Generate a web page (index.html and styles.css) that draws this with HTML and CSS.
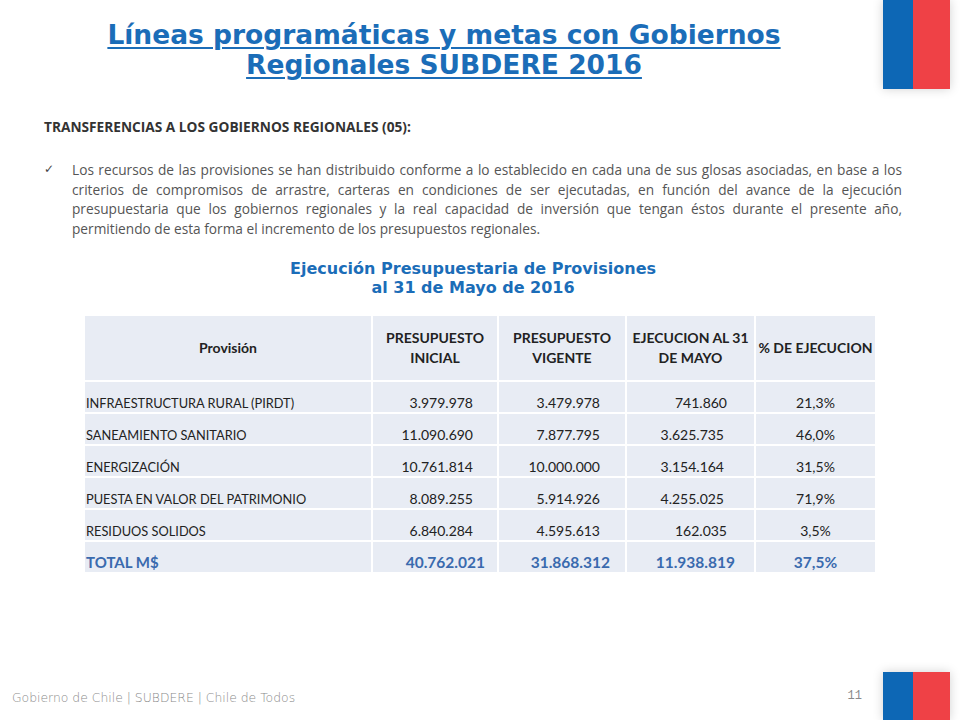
FILE: index.html
```html
<!DOCTYPE html>
<html lang="es">
<head>
<meta charset="utf-8">
<title>Líneas programáticas y metas con Gobiernos Regionales SUBDERE 2016</title>
<link rel="stylesheet" href="styles.css">
</head>
<body>
<div class="slide">
  <div class="flag flag-top"><span class="blue"></span><span class="red"></span></div>
  <div class="flag flag-bottom"><span class="blue"></span><span class="red"></span></div>

  <h1 class="title"><span>Líneas programáticas y metas con Gobiernos<br>Regionales SUBDERE 2016</span></h1>

  <p class="section-head">TRANSFERENCIAS A LOS GOBIERNOS REGIONALES (05):</p>

  <div class="bullet">
    <span class="check">&#10003;</span>
    <p class="bullet-text">Los recursos de las provisiones se han distribuido conforme a lo establecido en cada una de sus glosas asociadas, en base a los criterios de compromisos de arrastre, carteras en condiciones de ser ejecutadas, en función del avance de la ejecución presupuestaria que los gobiernos regionales y la real capacidad de inversión que tengan éstos durante el presente año, permitiendo de esta forma el incremento de los presupuestos regionales.</p>
  </div>

  <h2 class="chart-title">Ejecución Presupuestaria de Provisiones<br>al 31 de Mayo de 2016</h2>

  <div class="grid">
    <div class="cell head c1">Provisión</div>
    <div class="cell head">PRESUPUESTO<br>INICIAL</div>
    <div class="cell head">PRESUPUESTO<br>VIGENTE</div>
    <div class="cell head">EJECUCION AL 31<br>DE MAYO</div>
    <div class="cell head">% DE EJECUCION</div>

    <div class="cell name">INFRAESTRUCTURA RURAL (PIRDT)</div>
    <div class="cell n2">3.979.978</div>
    <div class="cell n3">3.479.978</div>
    <div class="cell n4 s">741.860</div>
    <div class="cell n5">21,3%</div>

    <div class="cell name">SANEAMIENTO SANITARIO</div>
    <div class="cell n2">11.090.690</div>
    <div class="cell n3">7.877.795</div>
    <div class="cell n4">3.625.735</div>
    <div class="cell n5">46,0%</div>

    <div class="cell name">ENERGIZACIÓN</div>
    <div class="cell n2">10.761.814</div>
    <div class="cell n3">10.000.000</div>
    <div class="cell n4">3.154.164</div>
    <div class="cell n5">31,5%</div>

    <div class="cell name">PUESTA EN VALOR DEL PATRIMONIO</div>
    <div class="cell n2">8.089.255</div>
    <div class="cell n3">5.914.926</div>
    <div class="cell n4">4.255.025</div>
    <div class="cell n5">71,9%</div>

    <div class="cell name">RESIDUOS SOLIDOS</div>
    <div class="cell n2">6.840.284</div>
    <div class="cell n3">4.595.613</div>
    <div class="cell n4 s">162.035</div>
    <div class="cell n5">3,5%</div>

    <div class="cell name total">TOTAL M$</div>
    <div class="cell n2 total">40.762.021</div>
    <div class="cell n3 total">31.868.312</div>
    <div class="cell n4 total t">11.938.819</div>
    <div class="cell n5 total">37,5%</div>
  </div>

  <div class="footer">
    <span class="footer-text">Gobierno de Chile | SUBDERE | Chile de Todos</span>
    <span class="page-num">11</span>
  </div>
</div>
</body>
</html>
```

FILE: styles.css
```css
html, body {
  margin: 0;
  padding: 0;
  background: #ffffff;
}

.slide {
  position: relative;
  width: 960px;
  height: 720px;
  overflow: hidden;
  background: #ffffff;
  display: flex;
  flex-direction: column;
}

.flag {
  position: absolute;
  left: 883px;
  width: 67px;
  display: flex;
  box-shadow: 0 0 10px rgba(0, 0, 0, 0.18);
}
.flag .blue { width: 30px; background: #0d67b5; }
.flag .red { flex: 1; background: #ef4146; }
.flag-top { top: 0; height: 89px; }
.flag-bottom { top: 672px; height: 48px; }

.title {
  margin: 20px 0 0 0;
  width: 888px;
  text-align: center;
  font-family: "DejaVu Sans", Verdana, sans-serif;
  font-weight: bold;
  font-size: 26.5px;
  line-height: 30px;
  color: #1b6db8;
}
.title span {
  text-decoration: underline;
  text-decoration-thickness: 2px;
  text-underline-offset: 3px;
}

.section-head {
  margin: 38px 0 0 44px;
  font-family: "Open Sans", sans-serif;
  font-weight: bold;
  font-size: 13.7px;
  line-height: 18px;
  color: #333333;
}

.bullet {
  display: flex;
  margin: 24px 0 0 44px;
  width: 858px;
}
.check {
  width: 28px;
  flex: none;
  font-family: "DejaVu Sans", sans-serif;
  font-size: 12px;
  line-height: 19.5px;
  color: #444444;
}
.bullet-text {
  margin: 0;
  flex: 1;
  text-align: justify;
  font-family: "Open Sans", sans-serif;
  font-size: 13.7px;
  line-height: 19.5px;
  color: #555555;
}

.chart-title {
  margin: 21px 0 0 0;
  width: 946px;
  text-align: center;
  font-family: "DejaVu Sans", sans-serif;
  font-weight: bold;
  font-size: 16px;
  line-height: 19px;
  color: #1b6db8;
}

.grid {
  margin: 19px 0 0 85px;
  display: grid;
  grid-template-columns: 286px 124px 126px 127px 119px;
  grid-template-rows: 64px repeat(6, 30px);
  gap: 2px;
  width: 790px;
  font-family: Lato, "Open Sans", sans-serif;
  font-size: 14px;
  line-height: 16px;
  color: #222222;
}
.cell {
  background: #e8ecf4;
  display: flex;
  align-items: flex-end;
  padding-bottom: 1px;
  box-sizing: border-box;
}
.head {
  align-items: center;
  justify-content: center;
  text-align: center;
  font-weight: bold;
  line-height: 20px;
  padding-bottom: 0;
}
.name { padding-left: 1px; font-size: 12.8px; }
.n2 { justify-content: flex-end; padding-right: 24px; }
.n3 { justify-content: flex-end; padding-right: 25px; }
.n4 { justify-content: flex-end; padding-right: 30px; }
.n4.s { padding-right: 27px; }
.n5 { justify-content: center; }
.total {
  color: #3a6aae;
  font-weight: bold;
  font-size: 15.5px;
  line-height: 18px;
}
.name.total { font-size: 15px; }
.n2.total { padding-right: 12px; }
.n3.total { padding-right: 15px; }
.n4.total { padding-right: 19px; }

.footer {
  margin-top: auto;
  height: 48px;
  display: flex;
  align-items: center;
  font-family: "DejaVu Sans", sans-serif;
  color: #8a8a8a;
}
.footer-text {
  margin-left: 12px;
  margin-top: 2px;
  font-size: 12.4px;
  font-stretch: condensed;
  font-weight: 300;
}
.page-num {
  margin-left: auto;
  margin-right: 98px;
  font-family: "Liberation Mono", monospace;
  font-size: 12px;
}
```
